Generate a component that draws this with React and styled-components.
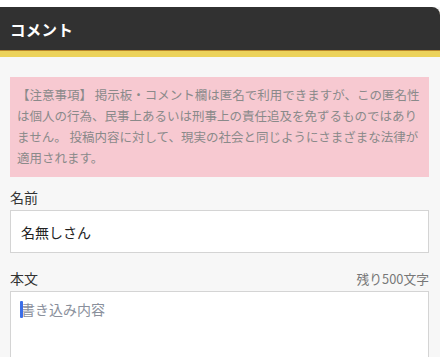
import React from "react";
import styled, { createGlobalStyle } from "styled-components";

const GlobalStyle = createGlobalStyle`
  html, body {
    margin: 0;
    padding: 0;
    background: #f7f7f7;
  }
  body {
    font-family: "Noto Sans CJK JP", "Noto Sans", sans-serif;
    color: #333;
  }
`;

const Page = styled.div`
  width: 440px;
  height: 357px;
  overflow: hidden;
  background: #f7f7f7;
  border-top: 7px solid #fff;
  box-sizing: border-box;
`;

const Header = styled.header`
  height: 44px;
  background: #313131;
  border-top-right-radius: 8px;
  border-bottom: 6px solid #ecd25a;
  box-shadow: inset 0 -1px 0 #b7852a;
  display: flex;
  align-items: center;
  padding: 0 10px;
`;

const Title = styled.h2`
  margin: 0;
  font-size: 15.5px;
  font-weight: 700;
  color: #fff;
  letter-spacing: 0.3px;
`;

const Body = styled.div`
  padding: 20px 11px 0 10px;
`;

const Notice = styled.p`
  margin: 0;
  background: #f7c9d1;
  color: #8a8a8a;
  font-size: 12.5px;
  line-height: 21px;
  padding: 7px 6px 9px 7px;
`;

const FieldHead = styled.div`
  display: flex;
  justify-content: space-between;
  align-items: flex-end;
  margin-top: ${(p) => p.$gap}px;
  margin-bottom: 3px;
`;

const Label = styled.label`
  font-size: 14px;
  line-height: 20px;
  color: #333;
`;

const Counter = styled.span`
  font-size: 12.8px;
  line-height: 18px;
  color: #777;
`;

const TextInput = styled.input`
  display: block;
  width: 100%;
  box-sizing: border-box;
  height: 43px;
  border: 1px solid #d4d4d4;
  background: #fff;
  padding: 0 10px;
  font-family: inherit;
  font-size: 14px;
  color: #222;
  outline: none;
`;

const AreaWrap = styled.div`
  position: relative;
`;

const TextArea = styled.textarea`
  display: block;
  width: 100%;
  box-sizing: border-box;
  height: 120px;
  border: 1px solid #d4d4d4;
  background: #fff;
  padding: 6px 10px;
  font-family: inherit;
  font-size: 14px;
  line-height: 22px;
  resize: none;
  outline: none;
  &::placeholder {
    color: #8a909c;
  }
`;

const Caret = styled.span`
  position: absolute;
  left: 10px;
  top: 10px;
  width: 3px;
  height: 17px;
  background: #3a6ee8;
  border-radius: 1px;
`;

export default function App() {
  return (
    <>
      <GlobalStyle />
      <Page>
        <Header>
          <Title>コメント</Title>
        </Header>
        <Body>
          <Notice>
            【注意事項】 掲示板・コメント欄は匿名で利用できますが、この匿名性は個人の行為、民事上あるいは刑事上の責任追及を免ずるものではありません。 投稿内容に対して、現実の社会と同じようにさまざまな法律が適用されます。
          </Notice>
          <FieldHead $gap={10}>
            <Label>名前</Label>
          </FieldHead>
          <TextInput defaultValue="名無しさん" />
          <FieldHead $gap={15}>
            <Label>本文</Label>
            <Counter>残り500文字</Counter>
          </FieldHead>
          <AreaWrap>
            <TextArea placeholder="書き込み内容" />
            <Caret />
          </AreaWrap>
        </Body>
      </Page>
    </>
  );
}
